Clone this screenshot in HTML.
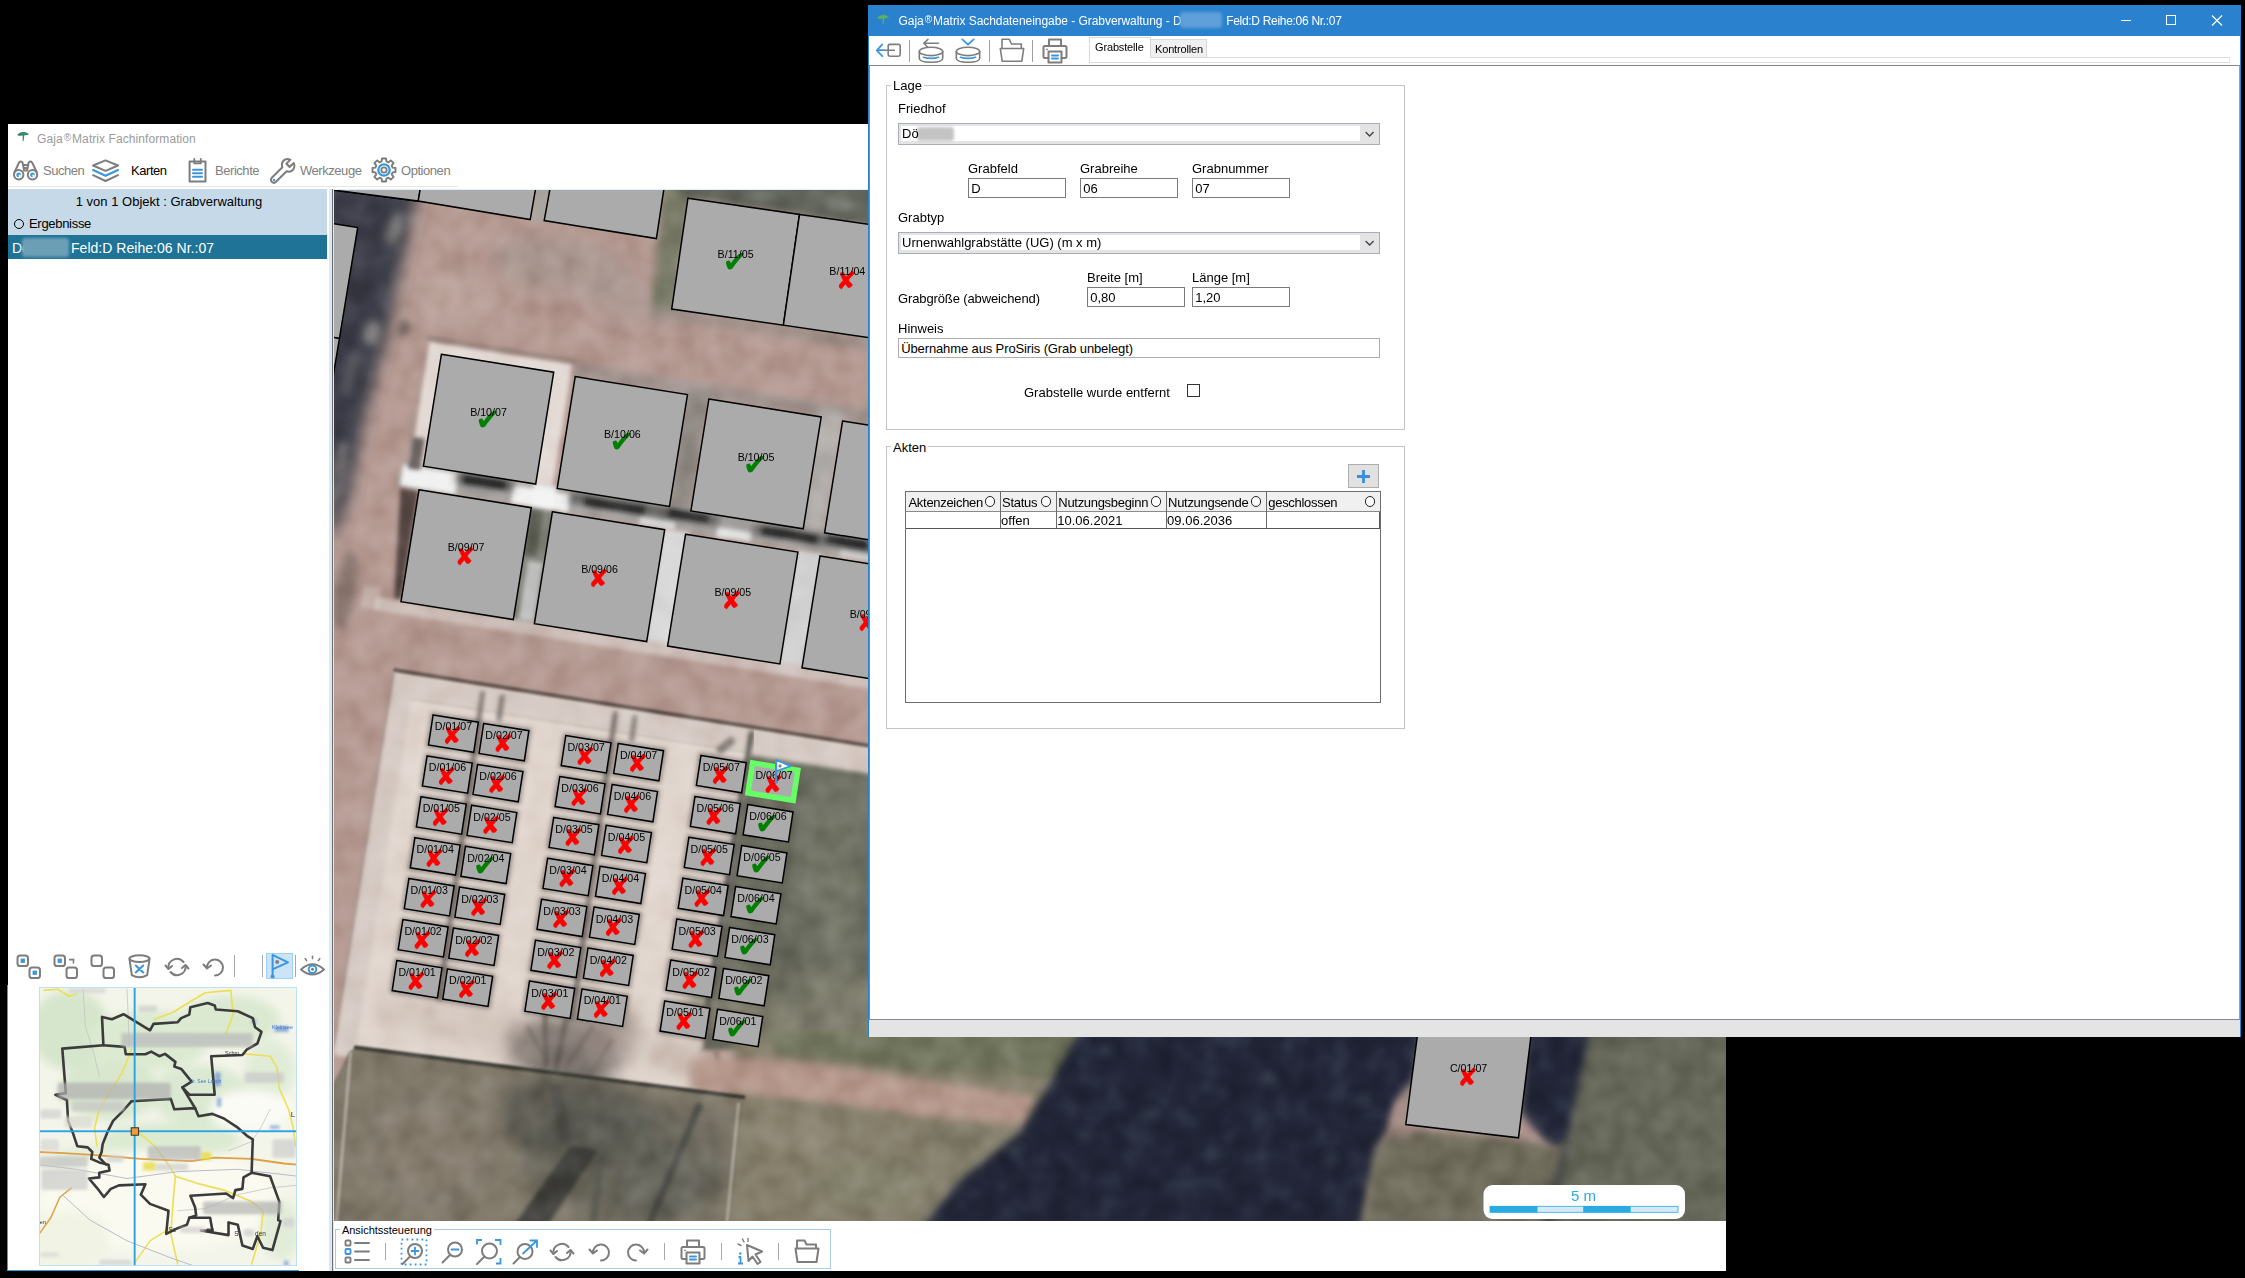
<!DOCTYPE html>
<html lang="de"><head><meta charset="utf-8"><title>Gaja Matrix</title>
<style>
*{box-sizing:border-box;margin:0;padding:0}
html,body{width:2245px;height:1278px;overflow:hidden;background:#000}
body{position:relative;font-family:"Liberation Sans","DejaVu Sans",sans-serif;font-size:13px;color:#000}
.abs{position:absolute}
.t{position:absolute;white-space:nowrap;line-height:16px;height:16px}
#main{position:absolute;left:8px;top:124px;width:1718px;height:1147px;background:#fff}
#dlg{position:absolute;left:868px;top:5px;width:1373px;height:1032px;background:#fff;border:1px solid #2a82cf;border-top:none}
.inp{position:absolute;border:1px solid #7a7a7a;background:#fff;height:20px;line-height:19.5px;padding-left:2.2px;white-space:nowrap}
.cmb{position:absolute;border:1px solid #a9adb6;background:#e4e4e4;height:21.5px;line-height:20.5px;padding-left:3px;white-space:nowrap}
.cmb i{position:absolute;left:2px;top:2px;right:19px;bottom:2.5px;background:#fff;z-index:0}
.cmb b{position:relative;font-weight:normal;z-index:1}
.grp{position:absolute;border:1px solid #c3c3c3}
.grp>span{position:absolute;left:4px;top:-7.5px;background:#fff;padding:0 2px;line-height:16px;white-space:nowrap}
.blur{position:absolute;filter:blur(2.5px)}
</style></head>
<body>
<div id="main"></div>
<svg class="abs" style="left:16px;top:130px" width="14" height="14" viewBox="0 0 14 14"><path d="M1 5 Q4 1.5 7.5 2 Q11 1.5 13 4.5 Q10 5.5 8.3 5.2 L7.6 11 L6.6 11 L6.8 5.4 Q4 6.5 1 5Z" fill="#2e8b57"/><path d="M3 4.2 Q7 2.4 11.5 4" stroke="#3b7fbf" stroke-width="0.8" fill="none"/></svg>
<div class="t" style="left:37px;top:131px;color:#9b9b9b;font-size:12px;letter-spacing:0.08px">Gaja<span style="font-size:10px;position:relative;top:-2px;letter-spacing:0;margin:0 1px">&#174;</span>Matrix Fachinformation</div>
<svg class="abs" style="left:12px;top:157px" width="28" height="28" viewBox="0 0 28 28" fill="none" stroke-linecap="round" stroke-linejoin="round"><g stroke="#7d7d7d" stroke-width="2"><path d="M7 5.6 Q8.8 3.6 10.6 5.6 L11.8 12 M7 5.6 L2.4 15.5 M20.2 5.6 Q18.4 3.6 16.6 5.6 L15.4 12 M20.2 5.6 L24.8 15.5 M11.6 8 H15.6 M11.8 11 H15.4 M11.8 13.6 H15.4"/><circle cx="6.7" cy="17.8" r="4.7"/><circle cx="20.5" cy="17.8" r="4.7"/></g><circle cx="6.7" cy="17.9" r="2.4" fill="#3a96dd"/><circle cx="20.5" cy="17.9" r="2.4" fill="#3a96dd"/><circle cx="7.7" cy="18.8" r="1.2" fill="#fff"/><circle cx="21.5" cy="18.8" r="1.2" fill="#fff"/></svg>
<div class="t" style="left:43px;top:163px;color:#808080;letter-spacing:-0.45px">Suchen</div>
<svg class="abs" style="left:92px;top:157px" width="28" height="28" viewBox="0 0 28 28" fill="none" stroke-linecap="round" stroke-linejoin="round"><path d="M13.5 3.3 L26 8.5 L13.5 13.8 L1.1 8.5Z" stroke="#7d7d7d" stroke-width="2"/><path d="M1.1 13 L13.5 18.8 L26 13" stroke="#3a96dd" stroke-width="2.1"/><path d="M1.1 18.2 L13.5 24 L26 18.2" stroke="#7d7d7d" stroke-width="2"/></svg>
<div class="t" style="left:131px;top:163px;color:#000;letter-spacing:-0.45px">Karten</div>
<svg class="abs" style="left:186px;top:157px" width="24" height="28" viewBox="0 0 24 28" fill="none" stroke-linecap="round" stroke-linejoin="round"><path d="M3.6 4.6 H19.5 V24.6 H3.6Z" stroke="#7d7d7d" stroke-width="2"/><path d="M8.3 2 V6.4 H14.8 V2" stroke="#7d7d7d" stroke-width="1.8"/><path d="M7 12.8 H16 M7 16.2 H16 M7 19.7 H16" stroke="#3a96dd" stroke-width="2"/></svg>
<div class="t" style="left:215px;top:163px;color:#808080;letter-spacing:-0.45px">Berichte</div>
<svg class="abs" style="left:269px;top:156px" width="28" height="28" viewBox="0 0 28 28" fill="none" stroke-linecap="round" stroke-linejoin="round"><path d="M24.8 7 L20.6 11 L17.4 7.8 L21.4 3.6 Q16.8 2 14.2 5 Q12 7.6 13.4 11.2 L2.8 21.8 Q1 24 3 26 Q5 27.8 7 25.8 L17.6 15.2 Q21.2 16.6 23.8 14 Q26.4 11.2 24.8 7Z" stroke="#7d7d7d" stroke-width="2"/><circle cx="5" cy="24" r="1.2" fill="#3a96dd"/></svg>
<div class="t" style="left:300px;top:163px;color:#808080;letter-spacing:-0.45px">Werkzeuge</div>
<svg class="abs" style="left:369.6px;top:156.3px" width="28" height="28" viewBox="0 0 28 28" fill="none" stroke-linecap="round" stroke-linejoin="round"><path d="M12.0 2.5 L16.0 2.5 L16.4 5.4 L18.4 6.3 L20.8 4.4 L23.6 7.2 L21.7 9.6 L22.6 11.6 L25.5 12.0 L25.5 16.0 L22.6 16.4 L21.7 18.4 L23.6 20.8 L20.8 23.6 L18.4 21.7 L16.4 22.6 L16.0 25.5 L12.0 25.5 L11.6 22.6 L9.6 21.7 L7.2 23.6 L4.4 20.8 L6.3 18.4 L5.4 16.4 L2.5 16.0 L2.5 12.0 L5.4 11.6 L6.3 9.6 L4.4 7.2 L7.2 4.4 L9.6 6.3 L11.6 5.4 Z" stroke="#7d7d7d" stroke-width="1.9"/><circle cx="14" cy="14" r="5.7" stroke="#3a96dd" stroke-width="2.3"/><circle cx="14" cy="14" r="2.7" stroke="#7d7d7d" stroke-width="1.8"/></svg>
<div class="t" style="left:401px;top:163px;color:#808080;letter-spacing:-0.45px">Optionen</div>
<div class="abs" style="left:8px;top:186px;width:450px;height:1px;background:#e6e6e6"></div>
<div class="abs" style="left:8px;top:189px;width:319px;height:46px;background:#c5d9e8"></div>
<div class="t" style="left:8px;top:193.5px;width:319px;text-align:center;padding-left:3px">1 von 1 Objekt : Grabverwaltung</div>
<div class="abs" style="left:14px;top:218.5px;width:10px;height:10px;border:1.3px solid #000;border-radius:50%"></div>
<div class="t" style="left:29px;top:215.5px;letter-spacing:-0.3px">Ergebnisse</div>
<div class="abs" style="left:8px;top:235px;width:319px;height:24px;background:#1e7396"></div>
<div class="t" style="left:12px;top:238.5px;color:#fff;font-size:14px;line-height:18px;height:18px">D&#246;</div>
<div class="abs" style="left:22px;top:238px;width:47px;height:19px;background:#6c9fb6;filter:blur(1.6px);border-radius:3px"></div>
<div class="t" style="left:71px;top:238.5px;color:#fff;font-size:14px;line-height:18px;height:18px;letter-spacing:0.03px">Feld:D Reihe:06 Nr.:07</div>
<div class="abs" style="left:329px;top:189px;width:5px;height:1082px;background:#d8eaf8"></div>
<div class="abs" style="left:332px;top:189px;width:1px;height:1082px;background:#6c6c6c"></div>
<div class="abs" style="left:333px;top:189px;width:1393px;height:1px;background:#dfeffc"></div>
<div class="abs" style="left:7px;top:985px;width:1px;height:286px;background:#2e9fe0"></div>
<div class="abs" style="left:7px;top:1270px;width:292px;height:1px;background:#2e9fe0"></div>
<svg class="abs" style="left:16px;top:953.8px" width="26" height="26" viewBox="0 0 26 26" fill="none" stroke-linecap="round" stroke-linejoin="round"><g stroke="#7d7d7d" stroke-width="2"><rect x="1.5" y="1.5" width="10.5" height="10.5" rx="2.6"/><rect x="13.5" y="13.5" width="10.5" height="10.5" rx="2.6"/></g><rect x="4.6" y="4.6" width="4.3" height="4.3" fill="#3a96dd"/><rect x="16.6" y="16.6" width="4.3" height="4.3" fill="#3a96dd"/></svg>
<svg class="abs" style="left:53px;top:953.8px" width="26" height="26" viewBox="0 0 26 26" fill="none" stroke-linecap="round" stroke-linejoin="round"><g stroke="#7d7d7d" stroke-width="2"><rect x="1.5" y="1.5" width="10.5" height="10.5" rx="2.6"/><rect x="13.5" y="13.5" width="10.5" height="10.5" rx="2.6"/></g><rect x="4.6" y="4.6" width="4.3" height="4.3" fill="#3a96dd"/><path d="M16 5.6 H20.5 V9.6" stroke="#7d7d7d" stroke-width="1.6" stroke-linecap="butt" stroke-linejoin="miter"/></svg>
<svg class="abs" style="left:90px;top:953.8px" width="26" height="26" viewBox="0 0 26 26" fill="none" stroke-linecap="round" stroke-linejoin="round"><g stroke="#7d7d7d" stroke-width="2"><rect x="1.5" y="1.5" width="10.5" height="10.5" rx="2.6"/><rect x="13.5" y="13.5" width="10.5" height="10.5" rx="2.6"/></g></svg>
<svg class="abs" style="left:127px;top:953px" width="25" height="27" viewBox="0 0 25 27" fill="none" stroke-linecap="round" stroke-linejoin="round"><ellipse cx="12.5" cy="5.6" rx="10" ry="3.4" stroke="#7d7d7d" stroke-width="2"/><path d="M2.5 6.2 L4.8 22.2 Q12.5 26.4 20.2 22.2 L22.5 6.2" stroke="#7d7d7d" stroke-width="2"/><path d="M8.8 12.5 L16.2 19.5 M16.2 12.5 L8.8 19.5" stroke="#3a96dd" stroke-width="2.1"/></svg>
<svg class="abs" style="left:163.5px;top:953.5px" width="26" height="26" viewBox="0 0 26 26" fill="none" stroke-linecap="round" stroke-linejoin="round"><g stroke="#7d7d7d" stroke-width="2"><path d="M4.5 14.5 A8.5 8.5 0 0 1 19.5 8"/><path d="M21.5 11.5 A8.5 8.5 0 0 1 6.5 18"/><path d="M1.5 11.5 L4.5 15 L8 12"/><path d="M24.5 14.5 L21.5 11 L18 14"/></g></svg>
<svg class="abs" style="left:202px;top:953.5px" width="24" height="26" viewBox="0 0 24 26" fill="none" stroke-linecap="round" stroke-linejoin="round"><g stroke="#7d7d7d" stroke-width="2"><path d="M5 14 A8 8 0 1 1 13 21.5"/><path d="M1.5 10.5 L5 14.5 L9 11.5"/></g></svg>
<div class="abs" style="left:234px;top:955px;width:1px;height:22px;background:#a8a8a8"></div>
<div class="abs" style="left:262px;top:955px;width:1px;height:22px;background:#a8a8a8"></div>
<div class="abs" style="left:266px;top:953px;width:27px;height:26px;background:#cce4f7;border:1px solid #9fd0f5"></div>
<svg class="abs" style="left:266px;top:953px" width="26" height="26" viewBox="0 0 26 26" fill="none" stroke-linecap="round" stroke-linejoin="round"><path d="M6.6 2 V23.5" stroke="#3a96dd" stroke-width="2"/><path d="M7 2.2 L22 9.4 L7 16.2" stroke="#3a96dd" stroke-width="2" fill="none"/><circle cx="11.2" cy="9" r="2" fill="#808080"/><circle cx="6.6" cy="23.6" r="2" fill="#3a96dd"/></svg>
<div class="abs" style="left:295px;top:955px;width:1px;height:22px;background:#a8a8a8"></div>
<svg class="abs" style="left:299px;top:953px" width="27" height="26" viewBox="0 0 27 26" fill="none" stroke-linecap="round" stroke-linejoin="round"><path d="M2 16.5 Q13.5 6 25 16.5 Q13.5 26.5 2 16.5Z" stroke="#7d7d7d" stroke-width="1.9"/><circle cx="13.5" cy="16.3" r="3.8" stroke="#3a96dd" stroke-width="2"/><circle cx="13.5" cy="16.3" r="1.5" fill="#7d7d7d"/><path d="M13.5 3.2 V5.6 M6.2 5.6 L7.6 7.6 M20.8 5.6 L19.4 7.6" stroke="#7d7d7d" stroke-width="1.6"/></svg>
<div class="abs" style="left:335px;top:1229px;width:495.5px;height:40px;border:1px solid #a9cbe5"></div>
<div class="t" style="left:340px;top:1221.7px;background:#fff;padding:0 2px;font-size:11px;letter-spacing:-0.04px">Ansichtssteuerung</div>
<svg class="abs" style="left:344px;top:1238px" width="28" height="28" viewBox="0 0 28 28" fill="none" stroke-linecap="round" stroke-linejoin="round"><g stroke="#7d7d7d" stroke-width="1.9"><rect x="1.5" y="2.5" width="5" height="5" rx="1"/><rect x="1.5" y="19.5" width="5" height="5" rx="1"/><path d="M11 5 H25 M11 13.5 H25 M11 22 H25"/></g><rect x="1.5" y="11" width="5" height="5" rx="1" stroke="#3a96dd" stroke-width="1.9"/></svg>
<div class="abs" style="left:385px;top:1243px;width:1px;height:17px;background:#a8a8a8"></div>
<svg class="abs" style="left:400px;top:1238px" width="29" height="29" viewBox="0 0 29 29" fill="none" stroke-linecap="round" stroke-linejoin="round"><rect x="1.5" y="1.5" width="25" height="25" stroke="#3a96dd" stroke-width="1.8" stroke-dasharray="1.8 3.2" stroke-linecap="butt"/><circle cx="15" cy="13" r="7" stroke="#7d7d7d" stroke-width="2"/><path d="M10 18.5 L2.5 26" stroke="#7d7d7d" stroke-width="2"/><path d="M15 9.5 V16.5 M11.5 13 H18.5" stroke="#3a96dd" stroke-width="1.8"/></svg>
<svg class="abs" style="left:440px;top:1238px" width="26" height="29" viewBox="0 0 26 29" fill="none" stroke-linecap="round" stroke-linejoin="round"><circle cx="15" cy="11.5" r="7" stroke="#7d7d7d" stroke-width="2"/><path d="M10 17 L2.5 24.5" stroke="#7d7d7d" stroke-width="2"/><path d="M11.5 11.5 H18.5" stroke="#3a96dd" stroke-width="1.8"/></svg>
<svg class="abs" style="left:475px;top:1238px" width="28" height="29" viewBox="0 0 28 29" fill="none" stroke-linecap="round" stroke-linejoin="round"><circle cx="14.5" cy="13" r="7.5" stroke="#7d7d7d" stroke-width="2"/><path d="M9 19 L2 26" stroke="#7d7d7d" stroke-width="2"/><path d="M2 6.5 V2 H7 M20 2 H25.5 V7 M25.5 20 V25.5 H21" stroke="#3a96dd" stroke-width="1.8" stroke-linecap="butt" stroke-linejoin="miter"/></svg>
<svg class="abs" style="left:512px;top:1238px" width="28" height="29" viewBox="0 0 28 29" fill="none" stroke-linecap="round" stroke-linejoin="round"><circle cx="13" cy="13.5" r="7.5" stroke="#7d7d7d" stroke-width="2"/><path d="M7.5 19.5 L1.5 25.5" stroke="#7d7d7d" stroke-width="2"/><path d="M11 15.5 L25 2.5 M18.5 2.5 H25 V9" stroke="#3a96dd" stroke-width="1.8"/></svg>
<svg class="abs" style="left:549px;top:1238.5px" width="26" height="26" viewBox="0 0 26 26" fill="none" stroke-linecap="round" stroke-linejoin="round"><g stroke="#7d7d7d" stroke-width="2"><path d="M4.5 14.5 A8.5 8.5 0 0 1 19.5 8"/><path d="M21.5 11.5 A8.5 8.5 0 0 1 6.5 18"/><path d="M1.5 11.5 L4.5 15 L8 12"/><path d="M24.5 14.5 L21.5 11 L18 14"/></g></svg>
<svg class="abs" style="left:588px;top:1238.5px" width="24" height="26" viewBox="0 0 24 26" fill="none" stroke-linecap="round" stroke-linejoin="round"><g stroke="#7d7d7d" stroke-width="2"><path d="M5 14 A8 8 0 1 1 13 21.5"/><path d="M1.5 10.5 L5 14.5 L9 11.5"/></g></svg>
<svg class="abs" style="left:625px;top:1238.5px" width="24" height="26" viewBox="0 0 24 26" fill="none" stroke-linecap="round" stroke-linejoin="round"><g stroke="#7d7d7d" stroke-width="2" transform="translate(24 0) scale(-1 1)"><path d="M5 14 A8 8 0 1 1 13 21.5"/><path d="M1.5 10.5 L5 14.5 L9 11.5"/></g></svg>
<div class="abs" style="left:664px;top:1243px;width:1px;height:17px;background:#a8a8a8"></div>
<svg class="abs" style="left:680px;top:1238px" width="27" height="28" viewBox="0 0 27 28" fill="none" stroke-linecap="round" stroke-linejoin="round"><g stroke="#7d7d7d" stroke-width="2"><path d="M7 9 V2.5 H19 V9"/><path d="M6.5 21 H3 Q1.5 21 1.5 19.5 V10.5 Q1.5 9 3 9 H23 Q24.5 9 24.5 10.5 V19.5 Q24.5 21 23 21 H19.5"/><path d="M6.5 14.5 H19.5 V25.5 H6.5Z"/></g><path d="M10 18.5 H16 M10 21.5 H16" stroke="#3a96dd" stroke-width="2"/><circle cx="5" cy="12.3" r="0.9" fill="#7d7d7d"/></svg>
<div class="abs" style="left:721px;top:1243px;width:1px;height:17px;background:#a8a8a8"></div>
<svg class="abs" style="left:736px;top:1237px" width="29" height="30" viewBox="0 0 29 30" fill="none" stroke-linecap="round" stroke-linejoin="round"><path d="M11 8 L26 14.5 L19.5 17.5 L24.5 25 L21.5 27 L16.5 19.5 L12.5 24Z" stroke="#7d7d7d" stroke-width="2"/><path d="M6.5 2 L8 5 M2 7 L5 8.5 M12 1.5 V4.5" stroke="#7d7d7d" stroke-width="1.4"/><path d="M2.5 20 H4.5 V26.5 M2 26.5 H7" stroke="#3a96dd" stroke-width="1.8" stroke-linecap="butt"/><circle cx="4.3" cy="16.5" r="1.2" fill="#3a96dd"/></svg>
<div class="abs" style="left:778px;top:1243px;width:1px;height:17px;background:#a8a8a8"></div>
<svg class="abs" style="left:794px;top:1238px" width="27" height="27" viewBox="0 0 27 27" fill="none" stroke-linecap="round" stroke-linejoin="round"><path d="M3.5 24 L1.5 10.5 H24.5 L22.5 24Z" stroke="#7d7d7d" stroke-width="2"/><path d="M3 10 V2.5 H10.5 L12.5 6.5 H22 V10" stroke="#7d7d7d" stroke-width="2"/></svg>
<svg class="abs" style="left:39px;top:987px" width="258" height="279" viewBox="39 987 258 279">
<defs><filter id="mb"><feGaussianBlur stdDeviation="1.6"/></filter><filter id="mb3"><feGaussianBlur stdDeviation="5"/></filter><clipPath id="mc"><rect x="39" y="987" width="258" height="279"/></clipPath></defs>
<g clip-path="url(#mc)">
<rect x="39" y="987" width="258" height="279" fill="#f4f5ea"/>
<g filter="url(#mb3)">
<ellipse cx="70" cy="1030" rx="40" ry="40" fill="#d6e6cc"/>
<ellipse cx="150" cy="1040" rx="60" ry="30" fill="#dcead2"/>
<ellipse cx="230" cy="1020" rx="50" ry="25" fill="#dbe9d1"/>
<ellipse cx="110" cy="1090" rx="50" ry="30" fill="#d8e7ce"/>
<ellipse cx="200" cy="1095" rx="50" ry="30" fill="#dbe9d2"/>
<ellipse cx="170" cy="1140" rx="70" ry="18" fill="#dcead2"/>
<ellipse cx="270" cy="1070" rx="25" ry="30" fill="#e0ecd8"/>
<ellipse cx="250" cy="1110" rx="40" ry="20" fill="#fbfbf6"/>
<ellipse cx="90" cy="1160" rx="40" ry="15" fill="#e4edd9"/>
<ellipse cx="160" cy="1200" rx="120" ry="50" fill="#fafaf0"/>
<ellipse cx="70" cy="1240" rx="40" ry="30" fill="#f1f4e4"/>
<ellipse cx="280" cy="1230" rx="20" ry="30" fill="#e2ecd8"/>
</g>
<g fill="none" stroke-linecap="round" stroke-linejoin="round">
<polyline points="43.9,990.4 57.7,989.2 69.2,996.2 76.2,993.9" stroke="#ecdf55" stroke-width="1.6"/>
<polyline points="154.7,1019.2 173.1,1012.3 191.6,1000.8 205.4,992.7 230.8,990.4 233.1,1014.6 226.2,1033.1" stroke="#ecdf55" stroke-width="1.6"/>
<polyline points="244.7,1053.9 270.1,1056.2 277,1067.7 279.3,1088.5 288.5,1109.3 293.2,1127.7 295.5,1146.2" stroke="#ecdf55" stroke-width="1.6"/>
<polyline points="131.6,1049.3 122.3,1072.3 110.8,1090.8 99.3,1109.3 94.6,1127.7 96.9,1146.2" stroke="#ecdf55" stroke-width="1.6"/>
<polyline points="138.5,1132.4 154.7,1146.2 168.5,1164.7 175.4,1176.2 173.1,1201.6 170.8,1233.9 177.7,1263.9" stroke="#ecdf55" stroke-width="1.6"/>
<polyline points="175.4,1176.2 196.2,1183.1 223.9,1190.1 251.6,1201.6 263.1,1210.8 260.8,1233.9 251.6,1263.9" stroke="#ecdf55" stroke-width="1.6"/>
<polyline points="133.9,1263.9 150,1240.8 168.5,1229.3" stroke="#ecdf55" stroke-width="1.4"/>
<polyline points="39.2,1152 64.6,1153.1 99.3,1155.4 140.8,1158.9 191.6,1161.2 214.7,1157.7 251.6,1158.9 283.9,1163.5 297.8,1164.7" stroke="#e0a040" stroke-width="1.8"/>
<polyline points="39.2,1233.9 50.8,1217.8 60,1197 71.6,1187.8" stroke="#e0a040" stroke-width="1.5"/>
<polyline points="39.2,1164.7 76.2,1169.3 127,1178.5 177.7,1171.6 237.8,1169.3 297.8,1176.2" stroke="#b9bcc8" stroke-width="1"/>
<polyline points="62.3,1194.7 90,1220.1 127,1240.8 168.5,1257 191.6,1265.1" stroke="#b9bcc8" stroke-width="1"/>
<polyline points="83.1,989.2 85.4,1026.2 94.6,1056.2 99.3,1077" stroke="#c4c4c4" stroke-width="0.8"/>
<polyline points="127,989.2 128.1,1014.6 129.3,1046.9" stroke="#c4c4c4" stroke-width="0.8"/>
<polyline points="177.7,1210.8 205.4,1208.5 237.8,1194.7 270.1,1187.8 295.5,1185.4" stroke="#c4c4c4" stroke-width="0.8"/>
<polyline points="270.1,1109.3 260.8,1127.7 251.6,1141.6 228.5,1150.8" stroke="#c4c4c4" stroke-width="0.8"/>
</g>
<g filter="url(#mb)">
<rect x="214.7" y="1072.3" width="5.8" height="13.9" fill="#7d9fd8" opacity="0.85"/>
<rect x="217" y="1097.7" width="4.2" height="9.2" fill="#8aa8dc" opacity="0.85"/>
<rect x="274.7" y="1026.2" width="13.9" height="5.8" fill="#7d9fd8" opacity="0.85"/>
<rect x="270.1" y="1125.4" width="9.2" height="3.5" fill="#8aa8dc" opacity="0.85"/>
<rect x="251.6" y="1019.2" width="4.6" height="4.6" fill="#8aa8dc" opacity="0.85"/>
<rect x="283.9" y="1260.5" width="4.6" height="6.9" fill="#8aa8dc" opacity="0.85"/>
<rect x="143.1" y="1162.4" width="12.7" height="8.1" fill="#e6dc4a" opacity="0.85"/>
<rect x="200.8" y="1152" width="10.4" height="8.1" fill="#e6dc4a" opacity="0.85"/>
</g>
<polyline points="103.4,1045.3 102,1016.9 111.9,1019.2 123.5,1014.2 150,1030.3 153.5,1023.9 177.7,1022.2 181.2,1018.1 189.3,1014.6 190.4,1007.2 207.7,1003.1 214.7,1005.4 215.8,1009.5 237.8,1011.2 252.8,1018.1 255.1,1027.3 261.5,1031.9 257.4,1043.5 247,1049.3 242.4,1055 211.2,1056.2 214.7,1094.7 189.3,1094.7 182.4,1087.3 191.6,1081.6 181.2,1068.9 174.3,1066.6 175.4,1061.9 165,1053.9 159.3,1056.2 151.2,1051.6 145.4,1054.3 125.8,1054.3 124.6,1046.9 103.4,1045.3" stroke="#3b3b3b" stroke-width="2.6" fill="none" stroke-linejoin="round" stroke-linecap="round"/>
<polyline points="103.4,1045.3 62.3,1048.6 65.8,1093.1 55.4,1094.7 66.9,1100 68.1,1120.8 72.7,1132.4 77.3,1146.2 87.7,1147.4 92.3,1152 91.2,1158.9 99.3,1162.4 108.5,1164.7 109.6,1170.4 99.3,1172.8 99.3,1177.4 88.9,1178.5 96.9,1187.8 103.9,1197 110.8,1188.9 118.9,1185.4 145.4,1184.3 140.8,1194.7 150,1203.9 168.5,1210.8 166.2,1233.9 177.7,1228.2 187,1224.7 189.3,1217.8 210.1,1217.8 212.4,1230.5 200.8,1230.5 228.5,1235.1 228.5,1222.4 237.8,1224.7 242.4,1245.5 252.8,1248.9 257.4,1236.2 263.1,1247.8 272.4,1250.1 280.5,1221.2 278.2,1220.1 279.3,1201.6 270.1,1176.2 251.6,1172.8 252.8,1139.3 247,1135.8 237.8,1127.7 223.9,1118.5 212.4,1113.9 198.5,1116.2 195.1,1108.1 174.3,1109.3 170.8,1098.9 131.6,1101.2" stroke="#3b3b3b" stroke-width="2.6" fill="none" stroke-linejoin="round" stroke-linecap="round"/>
<polyline points="131.6,1101.2 122.3,1111.6 113.1,1120.8 107.3,1132.4 102.7,1143.9 101.6,1152 99.3,1157.7 106.2,1164.7" stroke="#3b3b3b" stroke-width="2.6" fill="none" stroke-linejoin="round" stroke-linecap="round"/>
<polyline points="251.6,1172.8 243.5,1177.4 242.4,1188.9 235.4,1190.1 233.1,1198.1 226.2,1193.5 190.4,1195.8 195.1,1207.4 196.2,1215.5 189.3,1217.8" stroke="#3b3b3b" stroke-width="2.6" fill="none" stroke-linejoin="round" stroke-linecap="round"/>
<polyline points="182.4,1087.3 195.1,1108.1" stroke="#3b3b3b" stroke-width="2.6" fill="none" stroke-linejoin="round" stroke-linecap="round"/>
<g filter="url(#mb)">
<rect x="121.2" y="1033.1" width="131.6" height="13.9" rx="2" fill="#b8b8b8" opacity="0.72"/>
<rect x="57.7" y="1082.7" width="113.1" height="16.2" rx="2" fill="#b0b0b0" opacity="0.72"/>
<rect x="71.6" y="1101.2" width="53.1" height="10.4" rx="2" fill="#c6c6c6" opacity="0.72"/>
<rect x="147.7" y="1146.2" width="53.1" height="13.9" rx="2" fill="#b5b5b5" opacity="0.72"/>
<rect x="203.1" y="1201.6" width="78.5" height="12.7" rx="2" fill="#b3b3b3" opacity="0.72"/>
<rect x="39.2" y="1156.6" width="48.5" height="10.4" rx="2" fill="#c2c2c2" opacity="0.72"/>
<rect x="41.5" y="1169.3" width="46.2" height="20.8" rx="2" fill="#cbcbcb" opacity="0.72"/>
<rect x="244.7" y="1072.3" width="39.2" height="10.4" rx="2" fill="#c9c9c9" opacity="0.72"/>
<rect x="272.4" y="1139.3" width="23.1" height="18.5" rx="2" fill="#cdcdcd" opacity="0.72"/>
<rect x="40.4" y="1109.3" width="20.8" height="9.2" rx="2" fill="#d0d0d0" opacity="0.72"/>
<rect x="69.2" y="988.1" width="36.9" height="5.1" rx="2" fill="#d2d2d2" opacity="0.72"/>
<rect x="138.5" y="1005.4" width="18.5" height="6.5" rx="2" fill="#cfcfcf" opacity="0.72"/>
<rect x="155.8" y="1163.5" width="32.3" height="6.9" rx="2" fill="#cccccc" opacity="0.72"/>
<rect x="106.2" y="1155.4" width="17.3" height="6.9" rx="2" fill="#cfcfcf" opacity="0.72"/>
<rect x="40.4" y="1139.3" width="18.5" height="11.5" rx="2" fill="#d5d5d5" opacity="0.72"/>
<rect x="180" y="1227" width="25.4" height="5.8" rx="2" fill="#d2cccc" opacity="0.72"/>
<rect x="243.5" y="1229.3" width="10.4" height="6.9" rx="2" fill="#cccccc" opacity="0.72"/>
<rect x="282.8" y="1217.8" width="11.5" height="9.2" rx="2" fill="#d0d0d0" opacity="0.72"/>
<rect x="99.3" y="1259.8" width="32.3" height="5.1" rx="2" fill="#cfcfcf" opacity="0.72"/>
<rect x="40.4" y="1252.4" width="18.5" height="4.6" rx="2" fill="#d5d5d5" opacity="0.72"/>
<rect x="64.6" y="1116.2" width="27.7" height="11.5" rx="2" fill="#d8d8d0" opacity="0.72"/>
</g>
<g font-family="Liberation Sans, Arial, sans-serif" fill="#333">
<text x="168.5" y="1232.1" font-size="6.5">Sc</text>
<text x="206.6" y="1232.1" font-size="6.5">en</text>
<text x="234.3" y="1235.8" font-size="6.5">S</text>
<text x="255.1" y="1235.8" font-size="6.5">den</text>
<text x="290.8" y="1116.7" font-size="8">L</text>
<text x="271.9" y="1028.9" font-size="5.5" fill="#3a78c8">Kleinsee</text>
<text x="189.3" y="1083.2" font-size="5" fill="#3a78c8">Gr. See Lauch</text>
<text x="39.7" y="1224.2" font-size="5.5">en</text>
<text x="225.1" y="1055.3" font-size="5.5">Schm</text>
</g>
<rect x="133.7" y="987" width="1.9" height="279" fill="#29a3e3"/><rect x="39" y="1130.3" width="258" height="1.9" fill="#29a3e3"/>
<rect x="131.2" y="1127.8" width="7.4" height="7.4" fill="#f39a3a" stroke="#222" stroke-width="0.9"/>
</g>
<rect x="39.5" y="987.5" width="257" height="278" fill="none" stroke="#bfdff5" stroke-width="1"/>
</svg>
<svg class="abs" style="left:334px;top:190px" width="1392" height="1031" viewBox="334 190 1392 1031">
<defs><filter id="b2" x="-5%" y="-5%" width="110%" height="110%"><feGaussianBlur stdDeviation="2"/></filter><filter id="b4" x="-10%" y="-10%" width="120%" height="120%"><feGaussianBlur stdDeviation="4"/></filter><filter id="b8" x="-20%" y="-20%" width="140%" height="140%"><feGaussianBlur stdDeviation="8"/></filter><filter id="noise" x="0" y="0" width="100%" height="100%" color-interpolation-filters="sRGB"><feTurbulence type="fractalNoise" baseFrequency="0.04" numOctaves="2" seed="7"/><feColorMatrix type="matrix" values="0 0 0 1 0  0 0 0 1 0  0 0 0 1 0  0 0 0 0 1"/><feGaussianBlur stdDeviation="1.6"/></filter><filter id="b1"><feGaussianBlur stdDeviation="1.1"/></filter></defs>
<rect x="334" y="190" width="1392" height="1031" fill="#b59a92"/>
<g filter="url(#b8)" ><ellipse cx="560" cy="265" rx="70" ry="28" fill="#a3958f" opacity="0.6" transform="rotate(9 560 265)"/><ellipse cx="640" cy="300" rx="60" ry="22" fill="#a89a94" opacity="0.5" transform="rotate(9 640 300)"/><ellipse cx="450" cy="300" rx="40" ry="30" fill="#bca59d" opacity="0.7" transform="rotate(0 450 300)"/><ellipse cx="560" cy="640" rx="120" ry="18" fill="#b9a29a" opacity="0.6" transform="rotate(9 560 640)"/></g>
<g filter="url(#b8)" ><polygon points="330,186 418,186 404,255 388,330 364,420 348,500 330,545" fill="#41424d"/></g>
<g filter="url(#b4)" ><polygon points="330,186 396,186 384,255 368,330 348,420 336,480 330,500" fill="#3a3b47"/></g>
<g filter="url(#b4)" ><ellipse cx="394" cy="230" rx="8" ry="16" fill="#8d8c8a" opacity="0.8" transform="rotate(20 394 230)"/><ellipse cx="372" cy="332" rx="9" ry="12" fill="#8d8c8a" opacity="0.8" transform="rotate(20 372 332)"/><ellipse cx="352" cy="372" rx="6" ry="22" fill="#777" opacity="0.5" transform="rotate(12 352 372)"/><ellipse cx="404" cy="328" rx="6" ry="8" fill="#5c524f" opacity="0.8" transform="rotate(20 404 328)"/><ellipse cx="345" cy="590" rx="10" ry="40" fill="#6a5a56" opacity="0.6" transform="rotate(8 345 590)"/><ellipse cx="340" cy="470" rx="8" ry="30" fill="#8a8683" opacity="0.6" transform="rotate(8 340 470)"/></g>
<g filter="url(#b4)" ><polygon points="662,186 692,190 674,314 652,306" fill="#797c67"/><polygon points="652,306 900,343 898,354 650,316" fill="#9a8e86"/><polygon points="664,180 900,180 900,232 800,216 688,199" fill="#5f6259"/><polygon points="536,186 551,186 545,222 531,219" fill="#a6a6a2"/></g>
<g filter="url(#b4)" ><ellipse cx="840" cy="205" rx="18" ry="7" fill="#8e918a" opacity="0.7" transform="rotate(8 840 205)"/><ellipse cx="760" cy="196" rx="14" ry="5" fill="#777a72" opacity="0.7" transform="rotate(8 760 196)"/></g>
<g filter="url(#b2)" ><polygon points="429.3,341.2 572.5,364.1 552.1,491.4 408.9,468.6" fill="#e3d9d4" opacity="1"/></g>
<g filter="url(#b2)" ><path d="M427.8 338 L575 361.4" stroke="#85766f" stroke-width="3.5" stroke-linecap="round" opacity="0.8"/><path d="M426.8 337.8 L408.8 450.4" stroke="#a3958f" stroke-width="3" stroke-linecap="round" opacity="0.6"/></g>
<g filter="url(#b4)" ><polygon points="574.6,363.4 917.3,418.1 915.1,431.9 572.4,377.2" fill="#9b928e" opacity="0.85"/><polygon points="685.1,388.1 710.8,392.2 691.6,511.7 665.9,507.6" fill="#8f8a86" opacity="0.95"/><polygon points="818.4,409.4 844.1,413.5 824.9,532.9 799.3,528.8" fill="#b2b0ae" opacity="0.95"/></g>
<g filter="url(#b2)" ><polygon points="401.8,462.4 897.5,541.5 893.8,564.2 398.1,485.1" fill="#a9a7a5" opacity="1"/></g>
<g filter="url(#b2)" ><polygon points="403.4,464.7 458.7,473.5 455.4,494.3 400.1,485.4" fill="#f4f4f4" opacity="0.95"/><polygon points="513.5,485.3 570.8,494.4 568,512.2 510.7,503.1" fill="#f4f4f4" opacity="0.95"/><polygon points="640.3,515.7 675.9,521.3 674.5,530.2 638.9,524.5" fill="#f4f4f4" opacity="0.7"/><polygon points="717.5,526.9 752.1,532.5 750.5,542.3 715.9,536.8" fill="#f4f4f4" opacity="0.8"/><polygon points="840.8,547.6 895.1,556.3 893.7,565.2 839.4,556.5" fill="#f4f4f4" opacity="0.6"/><polygon points="534.2,482.5 557,486.2 552.5,513.8 529.8,510.2" fill="#f4f4f4" opacity="0.9"/></g>
<g filter="url(#b4)" ><polygon points="456.9,472.2 514.2,481.4 512.6,491.2 455.3,482.1" fill="#3a3a3a" opacity="0.8"/><polygon points="571.1,492.5 719.3,516.1 717.7,526 569.6,502.3" fill="#3a3a3a" opacity="0.8"/><polygon points="753.5,523.6 886.8,544.8 885.2,554.7 751.9,533.4" fill="#3a3a3a" opacity="0.8"/></g>
<g filter="url(#b2)" ><polygon points="464.5,475.5 506,482.1 504.9,489 463.4,482.4" fill="#171717" opacity="0.8"/><polygon points="585.5,497.8 644.7,507.2 643.6,514.1 584.4,504.7" fill="#171717" opacity="0.8"/><polygon points="669.7,509.2 709.2,515.5 708.1,522.4 668.6,516.1" fill="#171717" opacity="0.8"/><polygon points="763.1,527.1 817.4,535.8 816.3,542.7 762,534" fill="#171717" opacity="0.8"/><polygon points="827.6,535.4 867.1,541.7 866,548.6 826.5,542.3" fill="#171717" opacity="0.8"/></g>
<g filter="url(#b2)" ><polygon points="530.3,507.2 556,511.3 537.7,624.9 512.1,620.8" fill="#7d7f74" opacity="1"/><polygon points="663.6,528.5 689.3,532.6 669.5,656 643.8,651.9" fill="#d9d9d9" opacity="1"/><polygon points="796.9,549.7 822.6,553.8 802.8,677.3 777.1,673.2" fill="#d2d2d2" opacity="1"/><polygon points="376.1,597.1 875.8,676.8 873.7,689.6 374,609.9" fill="#cfc1bb" opacity="0.9"/></g>
<g filter="url(#b2)" ><polygon points="527.8,560.5 543.6,563 534.1,622.3 518.3,619.7" fill="#c9c9c9" opacity="0.9"/><polygon points="530.8,510.3 543.6,512.4 536.5,556.8 523.7,554.8" fill="#55574c" opacity="0.9"/></g>
<g filter="url(#b2)" ><polygon points="400.6,488.6 418.4,491.4 401.1,599 394.2,597.9" fill="#4a3f3b" opacity="0.9"/><polygon points="413,436.9 424.8,438.7 419.7,470.3 407.9,468.5" fill="#4d4542" opacity="0.85"/><polygon points="363.9,585 381.6,587.8 378.1,609.5 360.4,606.7" fill="#dcd4d0" opacity="0.35"/></g>
<g filter="url(#b2)" ><polygon points="395,670 908.5,751.9 902.2,791.4 752.1,767.5 696.6,1113 333.2,1055.1" fill="#d6cbc4"/></g>
<g filter="url(#b2)" ><polygon points="411.6,699 747.4,752.5 689.7,1111.9 353.9,1058.4" fill="#e0d5cd"/></g>
<g filter="url(#b8)" ><ellipse cx="470" cy="800" rx="60" ry="90" fill="#e6dcd5" opacity="0.6" transform="rotate(9 470 800)"/><ellipse cx="640" cy="880" rx="30" ry="80" fill="#e5dbd4" opacity="0.5" transform="rotate(9 640 880)"/><ellipse cx="470" cy="1022" rx="100" ry="22" fill="#cfc2b9" opacity="0.8" transform="rotate(8 470 1022)"/><ellipse cx="690" cy="1060" rx="45" ry="16" fill="#c3b2a8" opacity="0.8" transform="rotate(8 690 1060)"/></g>
<g filter="url(#b1)" ><path d="M395 670 L908.5 751.9" stroke="#5e4f4a" stroke-width="4" stroke-linecap="round" opacity="0.9"/><path d="M392.7 671.7 L332.8 1044.9" stroke="#a59790" stroke-width="3" stroke-linecap="round" opacity="0.7"/><path d="M411.6 699 L747.4 752.5" stroke="#b8aca4" stroke-width="2" stroke-linecap="round" opacity="0.4"/></g>
<g filter="url(#b2)" ><polygon points="750,755 904.1,779.5 900,1050 700,1050 702.1,1053.2" fill="#6e6f63"/></g>
<g filter="url(#b8)" ><ellipse cx="800" cy="1010" rx="110" ry="40" fill="#85826f" opacity="0.8" transform="rotate(5 800 1010)"/><ellipse cx="830" cy="880" rx="40" ry="90" fill="#747668" opacity="0.7" transform="rotate(0 830 880)"/><ellipse cx="790" cy="960" rx="30" ry="50" fill="#5f6258" opacity="0.5" transform="rotate(0 790 960)"/></g>
<g filter="url(#b2)" ><path d="M751.5 732.9 L704.9 1023.2" stroke="#474843" stroke-width="5" stroke-linecap="round" opacity="0.85"/></g>
<g filter="url(#b2)" ><path d="M482.6 692.9 L439.3 998.5" stroke="#5e5652" stroke-width="4.5" stroke-linecap="round" opacity="0.8"/><path d="M502.1 696.9 L499.1 718.9" stroke="#6a625e" stroke-width="5" stroke-linecap="round" opacity="0.8"/><path d="M615.3 713.5 L572 1019.1" stroke="#5e5652" stroke-width="4.5" stroke-linecap="round" opacity="0.8"/><path d="M634.8 717.5 L631.8 739.5" stroke="#6a625e" stroke-width="5" stroke-linecap="round" opacity="0.8"/><path d="M731 741.4 L721 749.4" stroke="#6a625e" stroke-width="8" stroke-linecap="round" opacity="0.7"/></g>
<g filter="url(#b2)" ><polygon points="396.8,960.5 442,967.8 437.4,997.9 392.2,990.6" fill="none" stroke="#4b4541" stroke-width="4.5" opacity="0.55"/><polygon points="402.9,919.6 448.1,926.9 443.5,957 398.2,949.7" fill="none" stroke="#4b4541" stroke-width="4.5" opacity="0.55"/><polygon points="408.9,878.6 454.1,885.9 449.5,916 404.3,908.7" fill="none" stroke="#4b4541" stroke-width="4.5" opacity="0.55"/><polygon points="414.9,837.7 460.1,845 455.6,875.1 410.3,867.8" fill="none" stroke="#4b4541" stroke-width="4.5" opacity="0.55"/><polygon points="421,796.8 466.2,804.1 461.6,834.2 416.4,826.9" fill="none" stroke="#4b4541" stroke-width="4.5" opacity="0.55"/><polygon points="427.1,755.9 472.2,763.1 467.7,793.2 422.4,786" fill="none" stroke="#4b4541" stroke-width="4.5" opacity="0.55"/><polygon points="433.1,714.9 478.3,722.2 473.7,752.3 428.5,745" fill="none" stroke="#4b4541" stroke-width="4.5" opacity="0.55"/><polygon points="447.4,969 492.6,976.3 488,1006.4 442.8,999.1" fill="none" stroke="#4b4541" stroke-width="4.5" opacity="0.55"/><polygon points="453.4,928.1 498.6,935.4 494.1,965.5 448.8,958.2" fill="none" stroke="#4b4541" stroke-width="4.5" opacity="0.55"/><polygon points="459.5,887.1 504.7,894.4 500.1,924.5 454.9,917.2" fill="none" stroke="#4b4541" stroke-width="4.5" opacity="0.55"/><polygon points="465.5,846.2 510.7,853.5 506.1,883.6 460.9,876.3" fill="none" stroke="#4b4541" stroke-width="4.5" opacity="0.55"/><polygon points="471.6,805.3 516.8,812.6 512.2,842.7 467,835.4" fill="none" stroke="#4b4541" stroke-width="4.5" opacity="0.55"/><polygon points="477.6,764.4 522.9,771.6 518.2,801.8 473,794.5" fill="none" stroke="#4b4541" stroke-width="4.5" opacity="0.55"/><polygon points="483.7,723.4 528.9,730.7 524.3,760.8 479.1,753.5" fill="none" stroke="#4b4541" stroke-width="4.5" opacity="0.55"/><polygon points="529.5,981.1 574.7,988.4 570.1,1018.5 524.9,1011.2" fill="none" stroke="#4b4541" stroke-width="4.5" opacity="0.55"/><polygon points="535.5,940.2 580.8,947.5 576.1,977.6 530.9,970.3" fill="none" stroke="#4b4541" stroke-width="4.5" opacity="0.55"/><polygon points="541.6,899.2 586.8,906.5 582.2,936.6 537,929.3" fill="none" stroke="#4b4541" stroke-width="4.5" opacity="0.55"/><polygon points="547.6,858.3 592.9,865.6 588.2,895.7 543,888.4" fill="none" stroke="#4b4541" stroke-width="4.5" opacity="0.55"/><polygon points="553.7,817.4 598.9,824.7 594.3,854.8 549.1,847.5" fill="none" stroke="#4b4541" stroke-width="4.5" opacity="0.55"/><polygon points="559.8,776.5 605,783.8 600.4,813.9 555.1,806.6" fill="none" stroke="#4b4541" stroke-width="4.5" opacity="0.55"/><polygon points="565.8,735.5 611,742.8 606.4,772.9 561.2,765.6" fill="none" stroke="#4b4541" stroke-width="4.5" opacity="0.55"/><polygon points="582,989 627.2,996.3 622.6,1026.4 577.4,1019.1" fill="none" stroke="#4b4541" stroke-width="4.5" opacity="0.55"/><polygon points="588,948.1 633.2,955.4 628.6,985.5 583.4,978.2" fill="none" stroke="#4b4541" stroke-width="4.5" opacity="0.55"/><polygon points="594.1,907.1 639.3,914.4 634.7,944.5 589.5,937.2" fill="none" stroke="#4b4541" stroke-width="4.5" opacity="0.55"/><polygon points="600.1,866.2 645.4,873.5 640.8,903.6 595.5,896.3" fill="none" stroke="#4b4541" stroke-width="4.5" opacity="0.55"/><polygon points="606.2,825.3 651.4,832.6 646.8,862.7 601.6,855.4" fill="none" stroke="#4b4541" stroke-width="4.5" opacity="0.55"/><polygon points="612.2,784.4 657.5,791.6 652.9,821.8 607.6,814.5" fill="none" stroke="#4b4541" stroke-width="4.5" opacity="0.55"/><polygon points="618.3,743.4 663.5,750.7 658.9,780.8 613.7,773.5" fill="none" stroke="#4b4541" stroke-width="4.5" opacity="0.55"/><polygon points="664.7,1001 709.9,1008.3 705.3,1038.4 660.1,1031.1" fill="none" stroke="#4b4541" stroke-width="4.5" opacity="0.55"/><polygon points="670.8,960.1 716,967.4 711.4,997.5 666.1,990.2" fill="none" stroke="#4b4541" stroke-width="4.5" opacity="0.55"/><polygon points="676.8,919.1 722,926.4 717.4,956.5 672.2,949.2" fill="none" stroke="#4b4541" stroke-width="4.5" opacity="0.55"/><polygon points="682.9,878.2 728.1,885.5 723.5,915.6 678.2,908.3" fill="none" stroke="#4b4541" stroke-width="4.5" opacity="0.55"/><polygon points="688.9,837.3 734.1,844.6 729.5,874.7 684.3,867.4" fill="none" stroke="#4b4541" stroke-width="4.5" opacity="0.55"/><polygon points="695,796.4 740.2,803.6 735.6,833.8 690.4,826.5" fill="none" stroke="#4b4541" stroke-width="4.5" opacity="0.55"/><polygon points="701,755.4 746.2,762.7 741.6,792.8 696.4,785.5" fill="none" stroke="#4b4541" stroke-width="4.5" opacity="0.55"/><polygon points="718,1009.3 763.2,1016.6 758.6,1046.7 713.4,1039.4" fill="none" stroke="#4b4541" stroke-width="4.5" opacity="0.25"/><polygon points="724,968.4 769.2,975.7 764.6,1005.8 719.4,998.5" fill="none" stroke="#4b4541" stroke-width="4.5" opacity="0.25"/><polygon points="730.1,927.4 775.3,934.7 770.7,964.8 725.5,957.5" fill="none" stroke="#4b4541" stroke-width="4.5" opacity="0.25"/><polygon points="736.1,886.5 781.4,893.8 776.8,923.9 731.5,916.6" fill="none" stroke="#4b4541" stroke-width="4.5" opacity="0.25"/><polygon points="742.2,845.6 787.4,852.9 782.8,883 737.6,875.7" fill="none" stroke="#4b4541" stroke-width="4.5" opacity="0.25"/><polygon points="748.2,804.6 793.5,811.9 788.9,842 743.6,834.8" fill="none" stroke="#4b4541" stroke-width="4.5" opacity="0.25"/><polygon points="754.3,763.7 799.5,771 794.9,801.1 749.7,793.8" fill="none" stroke="#4b4541" stroke-width="4.5" opacity="0.25"/></g>
<g filter="url(#b8)" ><ellipse cx="565" cy="1052" rx="56" ry="32" fill="#6f6660" opacity="0.85" transform="rotate(8 565 1052)"/><ellipse cx="600" cy="1030" rx="30" ry="26" fill="#8a7f78" opacity="0.6" transform="rotate(0 600 1030)"/><ellipse cx="615" cy="1035" rx="26" ry="30" fill="#a1958d" opacity="0.6" transform="rotate(0 615 1035)"/><ellipse cx="520" cy="1045" rx="20" ry="18" fill="#a89c94" opacity="0.5" transform="rotate(0 520 1045)"/></g>
<g filter="url(#b2)" ><path d="M545 1010 L546 1066" stroke="#5a524d" stroke-width="4" stroke-linecap="round" opacity="0.8"/><path d="M566 1018 L556 1070" stroke="#5a524d" stroke-width="5" stroke-linecap="round" opacity="0.7"/><path d="M528 1028 L548 1062" stroke="#665d58" stroke-width="4" stroke-linecap="round" opacity="0.6"/><path d="M592 1028 L565 1068" stroke="#665d58" stroke-width="4" stroke-linecap="round" opacity="0.6"/><path d="M612 1040 L590 1075" stroke="#70665f" stroke-width="4" stroke-linecap="round" opacity="0.5"/><path d="M716 1052 L725 1090" stroke="#6b5a52" stroke-width="3.5" stroke-linecap="round" opacity="0.8"/><path d="M712 1066 L721 1082" stroke="#6b5a52" stroke-width="3" stroke-linecap="round" opacity="0.6"/></g>
<g filter="url(#b4)" ><polygon points="735,1040 1100,1040 1100,1230 720,1230" fill="#857f6c"/><polygon points="775,1030 1100,1030 1100,1080 900,1070 775,1056" fill="#73765f"/></g>
<g filter="url(#b4)" ><polygon points="690,1058 760,1058 830,1065 930,1081 1035,1096 1025,1126 930,1117 830,1103 745,1094 690,1090" fill="#b5988b"/></g>
<g filter="url(#b8)" ><ellipse cx="870" cy="1185" rx="60" ry="28" fill="#85836e" opacity="0.7" transform="rotate(0 870 1185)"/><ellipse cx="800" cy="1135" rx="40" ry="15" fill="#958c7a" opacity="0.7" transform="rotate(0 800 1135)"/><ellipse cx="960" cy="1150" rx="30" ry="25" fill="#7e7b68" opacity="0.6" transform="rotate(0 960 1150)"/></g>
<g filter="url(#b1)" ><polygon points="355.6,1047.5 743.6,1097.1 729.5,1230 330,1230 330,1090 349,1052" fill="#80796a"/></g>
<g filter="url(#b8)" ><ellipse cx="430" cy="1150" rx="70" ry="55" fill="#867e6f" opacity="0.7" transform="rotate(0 430 1150)"/><ellipse cx="575" cy="1120" rx="75" ry="45" fill="#5a5951" opacity="0.8" transform="rotate(8 575 1120)"/><ellipse cx="625" cy="1160" rx="105" ry="62" fill="#55564e" opacity="0.5" transform="rotate(6 625 1160)"/><ellipse cx="660" cy="1180" rx="45" ry="45" fill="#67665d" opacity="0.7" transform="rotate(0 660 1180)"/><ellipse cx="700" cy="1130" rx="25" ry="30" fill="#777368" opacity="0.6" transform="rotate(0 700 1130)"/></g>
<g filter="url(#b2)" ><polygon points="570,1146 598,1150 548,1225 514,1225" fill="#3a3c39" opacity="0.9"/><path d="M699 1106 L650 1222" stroke="#484a45" stroke-width="7" stroke-linecap="round" opacity="0.85"/><path d="M603 1150 L593 1222" stroke="#53554f" stroke-width="8" stroke-linecap="round" opacity="0.6"/><path d="M556 1090 L566 1140" stroke="#484a46" stroke-width="12" stroke-linecap="round" opacity="0.55"/><path d="M640 1120 L655 1160" stroke="#55574f" stroke-width="8" stroke-linecap="round" opacity="0.4"/></g>
<g filter="url(#b1)" ><path d="M355.6 1047.5 L743.6 1097.1" stroke="#3a3834" stroke-width="3.8" stroke-linecap="round" opacity="0.95"/><path d="M350.5 1053 L336.5 1222" stroke="#c6beb4" stroke-width="3.2" stroke-linecap="round" opacity="0.65"/><path d="M738.5 1104 L727 1222" stroke="#b9b4a9" stroke-width="3.2" stroke-linecap="round" opacity="0.7"/></g>
<g filter="url(#b4)" ><polygon points="1080,1030 1425,1030 1412,1090 1396,1102 1380,1150 1363,1230 920,1230 960,1180 1020,1132 1046,1090" fill="#202739"/><polygon points="1526,1030 1616,1030 1592,1100 1574,1142 1552,1150 1520,1112" fill="#202739"/></g>
<g filter="url(#b4)" ><polygon points="1590,1030 1740,1030 1740,1230 1540,1230 1566,1145" fill="#66685a"/><polygon points="1375,1145 1400,1128 1525,1140 1562,1148 1545,1230 1360,1230" fill="#6f6c5c"/></g>
<g filter="url(#b4)" ><path d="M1566 1142 L1548 1222" stroke="#3b3f3e" stroke-width="9" stroke-linecap="round" opacity="0.8"/><ellipse cx="1408" cy="1112" rx="13" ry="28" fill="#a38e86" opacity="0.9" transform="rotate(15 1408 1112)"/></g>
<g filter="url(#b4)" ><ellipse cx="1105" cy="1050" rx="8" ry="6" fill="#4a5160" opacity="0.45" transform="rotate(0 1105 1050)"/><ellipse cx="1085" cy="1135" rx="8" ry="6" fill="#4a5160" opacity="0.45" transform="rotate(0 1085 1135)"/><ellipse cx="1215" cy="1155" rx="8" ry="6" fill="#4a5160" opacity="0.45" transform="rotate(0 1215 1155)"/><ellipse cx="1150" cy="1115" rx="8" ry="6" fill="#4a5160" opacity="0.45" transform="rotate(0 1150 1115)"/><ellipse cx="1015" cy="1150" rx="8" ry="6" fill="#4a5160" opacity="0.45" transform="rotate(0 1015 1150)"/><ellipse cx="1270" cy="1080" rx="8" ry="6" fill="#4a5160" opacity="0.45" transform="rotate(0 1270 1080)"/><ellipse cx="1360" cy="1100" rx="8" ry="6" fill="#4a5160" opacity="0.45" transform="rotate(0 1360 1100)"/><ellipse cx="1330" cy="1160" rx="8" ry="6" fill="#4a5160" opacity="0.45" transform="rotate(0 1330 1160)"/></g>
<rect x="334" y="190" width="1392" height="1031" filter="url(#noise)" style="mix-blend-mode:soft-light" opacity="0.34"/>
<polygon points="441.4,354.3 553.7,372.2 535.7,484.1 423.4,466.2" fill="#ababab" stroke="#000" stroke-width="1.5"/>
<polygon points="575.2,376.6 687.5,394.5 669.5,506.4 557.2,488.5" fill="#ababab" stroke="#000" stroke-width="1.5"/>
<polygon points="708.9,399 821.2,416.9 803.2,528.8 690.9,510.9" fill="#ababab" stroke="#000" stroke-width="1.5"/>
<polygon points="842.6,420.9 954.9,438.8 936.9,550.7 824.6,532.8" fill="#ababab" stroke="#000" stroke-width="1.5"/>
<polygon points="419,489.8 531.3,507.7 513.3,619.6 401,601.7" fill="#ababab" stroke="#000" stroke-width="1.5"/>
<polygon points="552.4,511.8 664.7,529.7 646.7,641.6 534.4,623.7" fill="#ababab" stroke="#000" stroke-width="1.5"/>
<polygon points="685.6,534.2 797.9,552.1 779.9,664 667.6,646.1" fill="#ababab" stroke="#000" stroke-width="1.5"/>
<polygon points="820,555.9 932.3,573.8 914.3,685.7 802,667.8" fill="#ababab" stroke="#000" stroke-width="1.5"/>
<polygon points="687.9,198.3 799.5,214.4 783.4,325.2 671.7,309.1" fill="#ababab" stroke="#000" stroke-width="1.5"/>
<polygon points="799.5,214.4 911.5,230.6 895.4,341.4 783.4,325.2" fill="#ababab" stroke="#000" stroke-width="1.5"/>
<polygon points="300,185.6 420.9,186.5 418.2,201.1 300,185.5" fill="#ababab" stroke="#000" stroke-width="1.5"/>
<polygon points="330,160 421.5,183 418.2,201.1 330,189.6" fill="#ababab" stroke="#000" stroke-width="1.5"/>
<polygon points="422.5,175 538,175 530.2,219.6 418.2,201.1" fill="#ababab" stroke="#000" stroke-width="1.5"/>
<polygon points="552.5,175 666,175 656.4,238.6 544.2,220.6" fill="#ababab" stroke="#000" stroke-width="1.5"/>
<polygon points="300,218.5 357.7,227.5 339.4,338.5 300,332" fill="#ababab" stroke="#000" stroke-width="1.5"/>
<polygon points="300,332 339.4,338.5 321,450 300,447" fill="#ababab" stroke="#000" stroke-width="1.5"/>
<polygon points="1428.5,950 1541.5,950 1518.5,1137.8 1405.8,1124.5" fill="#ababab" stroke="#000" stroke-width="1.5"/>
<polygon points="396.8,960.5 442,967.8 437.4,997.9 392.2,990.6" fill="#ababab" stroke="#000" stroke-width="1.5"/>
<polygon points="402.9,919.6 448.1,926.9 443.4,957 398.2,949.7" fill="#ababab" stroke="#000" stroke-width="1.5"/>
<polygon points="408.9,878.6 454.1,885.9 449.5,916 404.3,908.7" fill="#ababab" stroke="#000" stroke-width="1.5"/>
<polygon points="414.9,837.7 460.1,845 455.5,875.1 410.3,867.8" fill="#ababab" stroke="#000" stroke-width="1.5"/>
<polygon points="421,796.8 466.2,804.1 461.6,834.2 416.4,826.9" fill="#ababab" stroke="#000" stroke-width="1.5"/>
<polygon points="427.1,755.9 472.2,763.1 467.6,793.2 422.4,786" fill="#ababab" stroke="#000" stroke-width="1.5"/>
<polygon points="433.1,714.9 478.3,722.2 473.7,752.3 428.5,745" fill="#ababab" stroke="#000" stroke-width="1.5"/>
<polygon points="447.4,969 492.6,976.3 488,1006.4 442.8,999.1" fill="#ababab" stroke="#000" stroke-width="1.5"/>
<polygon points="453.4,928.1 498.6,935.4 494,965.5 448.8,958.2" fill="#ababab" stroke="#000" stroke-width="1.5"/>
<polygon points="459.5,887.1 504.7,894.4 500.1,924.5 454.9,917.2" fill="#ababab" stroke="#000" stroke-width="1.5"/>
<polygon points="465.5,846.2 510.7,853.5 506.1,883.6 460.9,876.3" fill="#ababab" stroke="#000" stroke-width="1.5"/>
<polygon points="471.6,805.3 516.8,812.6 512.2,842.7 467,835.4" fill="#ababab" stroke="#000" stroke-width="1.5"/>
<polygon points="477.6,764.4 522.9,771.6 518.2,801.8 473,794.5" fill="#ababab" stroke="#000" stroke-width="1.5"/>
<polygon points="483.7,723.4 528.9,730.7 524.3,760.8 479.1,753.5" fill="#ababab" stroke="#000" stroke-width="1.5"/>
<polygon points="529.5,981.1 574.7,988.4 570.1,1018.5 524.9,1011.2" fill="#ababab" stroke="#000" stroke-width="1.5"/>
<polygon points="535.5,940.2 580.8,947.5 576.1,977.6 530.9,970.3" fill="#ababab" stroke="#000" stroke-width="1.5"/>
<polygon points="541.6,899.2 586.8,906.5 582.2,936.6 537,929.3" fill="#ababab" stroke="#000" stroke-width="1.5"/>
<polygon points="547.6,858.3 592.9,865.6 588.2,895.7 543,888.4" fill="#ababab" stroke="#000" stroke-width="1.5"/>
<polygon points="553.7,817.4 598.9,824.7 594.3,854.8 549.1,847.5" fill="#ababab" stroke="#000" stroke-width="1.5"/>
<polygon points="559.8,776.5 605,783.8 600.4,813.9 555.1,806.6" fill="#ababab" stroke="#000" stroke-width="1.5"/>
<polygon points="565.8,735.5 611,742.8 606.4,772.9 561.2,765.6" fill="#ababab" stroke="#000" stroke-width="1.5"/>
<polygon points="582,989 627.2,996.3 622.6,1026.4 577.4,1019.1" fill="#ababab" stroke="#000" stroke-width="1.5"/>
<polygon points="588,948.1 633.2,955.4 628.6,985.5 583.4,978.2" fill="#ababab" stroke="#000" stroke-width="1.5"/>
<polygon points="594.1,907.1 639.3,914.4 634.7,944.5 589.5,937.2" fill="#ababab" stroke="#000" stroke-width="1.5"/>
<polygon points="600.1,866.2 645.4,873.5 640.8,903.6 595.5,896.3" fill="#ababab" stroke="#000" stroke-width="1.5"/>
<polygon points="606.2,825.3 651.4,832.6 646.8,862.7 601.6,855.4" fill="#ababab" stroke="#000" stroke-width="1.5"/>
<polygon points="612.2,784.4 657.5,791.6 652.9,821.8 607.6,814.5" fill="#ababab" stroke="#000" stroke-width="1.5"/>
<polygon points="618.3,743.4 663.5,750.7 658.9,780.8 613.7,773.5" fill="#ababab" stroke="#000" stroke-width="1.5"/>
<polygon points="664.7,1001 709.9,1008.3 705.3,1038.4 660.1,1031.1" fill="#ababab" stroke="#000" stroke-width="1.5"/>
<polygon points="670.8,960.1 716,967.4 711.4,997.5 666.1,990.2" fill="#ababab" stroke="#000" stroke-width="1.5"/>
<polygon points="676.8,919.1 722,926.4 717.4,956.5 672.2,949.2" fill="#ababab" stroke="#000" stroke-width="1.5"/>
<polygon points="682.9,878.2 728.1,885.5 723.5,915.6 678.2,908.3" fill="#ababab" stroke="#000" stroke-width="1.5"/>
<polygon points="688.9,837.3 734.1,844.6 729.5,874.7 684.3,867.4" fill="#ababab" stroke="#000" stroke-width="1.5"/>
<polygon points="695,796.4 740.2,803.6 735.6,833.8 690.4,826.5" fill="#ababab" stroke="#000" stroke-width="1.5"/>
<polygon points="701,755.4 746.2,762.7 741.6,792.8 696.4,785.5" fill="#ababab" stroke="#000" stroke-width="1.5"/>
<polygon points="717.5,1009.3 762.7,1016.6 758.1,1046.7 712.9,1039.4" fill="#ababab" stroke="#000" stroke-width="1.5"/>
<polygon points="723.5,968.4 768.8,975.7 764.1,1005.8 718.9,998.5" fill="#ababab" stroke="#000" stroke-width="1.5"/>
<polygon points="729.6,927.4 774.8,934.7 770.2,964.8 725,957.5" fill="#ababab" stroke="#000" stroke-width="1.5"/>
<polygon points="735.6,886.5 780.9,893.8 776.2,923.9 731,916.6" fill="#ababab" stroke="#000" stroke-width="1.5"/>
<polygon points="741.7,845.6 786.9,852.9 782.3,883 737.1,875.7" fill="#ababab" stroke="#000" stroke-width="1.5"/>
<polygon points="747.8,804.6 793,811.9 788.4,842 743.1,834.8" fill="#ababab" stroke="#000" stroke-width="1.5"/>
<polygon points="753.8,763.7 799,771 794.4,801.1 749.2,793.8" fill="#ababab"/>
<polygon points="752.6,762.9 797.8,770.2 793.2,800.3 748,793" fill="none" stroke="#66ff66" stroke-width="5.5" stroke-linejoin="miter"/>
<g font-family="DejaVu Sans, sans-serif" text-anchor="middle">
<text x="487.9" y="429.9" font-size="30" fill="#008000">&#10004;</text>
<text x="621.8" y="452.2" font-size="30" fill="#008000">&#10004;</text>
<text x="755.4" y="474.6" font-size="30" fill="#008000">&#10004;</text>
<text x="894.4" y="490.7" font-size="30" fill="#008000">&#10004;</text>
<text x="465" y="565" font-size="24.5" fill="#ff0000" stroke="#ff0000" stroke-width="0.35">&#10008;</text>
<text x="598.4" y="587" font-size="24.5" fill="#ff0000" stroke="#ff0000" stroke-width="0.35">&#10008;</text>
<text x="731.6" y="609.4" font-size="24.5" fill="#ff0000" stroke="#ff0000" stroke-width="0.35">&#10008;</text>
<text x="866.9" y="631.2" font-size="24.5" fill="#ff0000" stroke="#ff0000" stroke-width="0.35">&#10008;</text>
<text x="735" y="272.4" font-size="30" fill="#008000">&#10004;</text>
<text x="846.2" y="288.5" font-size="24.5" fill="#ff0000" stroke="#ff0000" stroke-width="0.35">&#10008;</text>
<text x="1467.5" y="1085.8" font-size="24.5" fill="#ff0000" stroke="#ff0000" stroke-width="0.35">&#10008;</text>
<text x="416" y="989.5" font-size="24.5" fill="#ff0000" stroke="#ff0000" stroke-width="0.35">&#10008;</text>
<text x="422" y="948.6" font-size="24.5" fill="#ff0000" stroke="#ff0000" stroke-width="0.35">&#10008;</text>
<text x="428.1" y="907.6" font-size="24.5" fill="#ff0000" stroke="#ff0000" stroke-width="0.35">&#10008;</text>
<text x="434.1" y="866.7" font-size="24.5" fill="#ff0000" stroke="#ff0000" stroke-width="0.35">&#10008;</text>
<text x="440.2" y="825.8" font-size="24.5" fill="#ff0000" stroke="#ff0000" stroke-width="0.35">&#10008;</text>
<text x="446.2" y="784.8" font-size="24.5" fill="#ff0000" stroke="#ff0000" stroke-width="0.35">&#10008;</text>
<text x="452.3" y="743.9" font-size="24.5" fill="#ff0000" stroke="#ff0000" stroke-width="0.35">&#10008;</text>
<text x="466.6" y="998" font-size="24.5" fill="#ff0000" stroke="#ff0000" stroke-width="0.35">&#10008;</text>
<text x="472.6" y="957.1" font-size="24.5" fill="#ff0000" stroke="#ff0000" stroke-width="0.35">&#10008;</text>
<text x="478.7" y="916.1" font-size="24.5" fill="#ff0000" stroke="#ff0000" stroke-width="0.35">&#10008;</text>
<text x="485.2" y="875.6" font-size="30" fill="#008000">&#10004;</text>
<text x="490.8" y="834.3" font-size="24.5" fill="#ff0000" stroke="#ff0000" stroke-width="0.35">&#10008;</text>
<text x="496.8" y="793.3" font-size="24.5" fill="#ff0000" stroke="#ff0000" stroke-width="0.35">&#10008;</text>
<text x="502.9" y="752.4" font-size="24.5" fill="#ff0000" stroke="#ff0000" stroke-width="0.35">&#10008;</text>
<text x="548.7" y="1010.1" font-size="24.5" fill="#ff0000" stroke="#ff0000" stroke-width="0.35">&#10008;</text>
<text x="554.7" y="969.2" font-size="24.5" fill="#ff0000" stroke="#ff0000" stroke-width="0.35">&#10008;</text>
<text x="560.8" y="928.2" font-size="24.5" fill="#ff0000" stroke="#ff0000" stroke-width="0.35">&#10008;</text>
<text x="566.9" y="887.3" font-size="24.5" fill="#ff0000" stroke="#ff0000" stroke-width="0.35">&#10008;</text>
<text x="572.9" y="846.4" font-size="24.5" fill="#ff0000" stroke="#ff0000" stroke-width="0.35">&#10008;</text>
<text x="578.9" y="805.5" font-size="24.5" fill="#ff0000" stroke="#ff0000" stroke-width="0.35">&#10008;</text>
<text x="585" y="764.5" font-size="24.5" fill="#ff0000" stroke="#ff0000" stroke-width="0.35">&#10008;</text>
<text x="601.2" y="1018" font-size="24.5" fill="#ff0000" stroke="#ff0000" stroke-width="0.35">&#10008;</text>
<text x="607.2" y="977.1" font-size="24.5" fill="#ff0000" stroke="#ff0000" stroke-width="0.35">&#10008;</text>
<text x="613.3" y="936.1" font-size="24.5" fill="#ff0000" stroke="#ff0000" stroke-width="0.35">&#10008;</text>
<text x="619.4" y="895.2" font-size="24.5" fill="#ff0000" stroke="#ff0000" stroke-width="0.35">&#10008;</text>
<text x="625.4" y="854.3" font-size="24.5" fill="#ff0000" stroke="#ff0000" stroke-width="0.35">&#10008;</text>
<text x="631.4" y="813.3" font-size="24.5" fill="#ff0000" stroke="#ff0000" stroke-width="0.35">&#10008;</text>
<text x="637.5" y="772.4" font-size="24.5" fill="#ff0000" stroke="#ff0000" stroke-width="0.35">&#10008;</text>
<text x="683.9" y="1030" font-size="24.5" fill="#ff0000" stroke="#ff0000" stroke-width="0.35">&#10008;</text>
<text x="689.9" y="989.1" font-size="24.5" fill="#ff0000" stroke="#ff0000" stroke-width="0.35">&#10008;</text>
<text x="696" y="948.1" font-size="24.5" fill="#ff0000" stroke="#ff0000" stroke-width="0.35">&#10008;</text>
<text x="702.1" y="907.2" font-size="24.5" fill="#ff0000" stroke="#ff0000" stroke-width="0.35">&#10008;</text>
<text x="708.1" y="866.3" font-size="24.5" fill="#ff0000" stroke="#ff0000" stroke-width="0.35">&#10008;</text>
<text x="714.1" y="825.3" font-size="24.5" fill="#ff0000" stroke="#ff0000" stroke-width="0.35">&#10008;</text>
<text x="720.2" y="784.4" font-size="24.5" fill="#ff0000" stroke="#ff0000" stroke-width="0.35">&#10008;</text>
<text x="737.2" y="1038.7" font-size="30" fill="#008000">&#10004;</text>
<text x="743.2" y="997.8" font-size="30" fill="#008000">&#10004;</text>
<text x="749.3" y="956.8" font-size="30" fill="#008000">&#10004;</text>
<text x="755.4" y="915.9" font-size="30" fill="#008000">&#10004;</text>
<text x="761.4" y="875" font-size="30" fill="#008000">&#10004;</text>
<text x="767.4" y="834" font-size="30" fill="#008000">&#10004;</text>
<text x="773" y="792.7" font-size="24.5" fill="#ff0000" stroke="#ff0000" stroke-width="0.35">&#10008;</text>
</g>
<g font-family="Liberation Sans, Arial, sans-serif" font-size="10.67" fill="#000" text-anchor="middle">
<text x="488.5" y="415.9">B/10/07</text>
<text x="622.4" y="438.2">B/10/06</text>
<text x="756" y="460.6">B/10/05</text>
<text x="895" y="476.7">B/10/04</text>
<text x="466.1" y="551.4">B/09/07</text>
<text x="599.5" y="573.4">B/09/06</text>
<text x="732.8" y="595.8">B/09/05</text>
<text x="868" y="617.6">B/09/04</text>
<text x="735.6" y="258.4">B/11/05</text>
<text x="847.3" y="274.9">B/11/04</text>
<text x="1468.6" y="1072.2">C/01/07</text>
<text x="417.1" y="975.9">D/01/01</text>
<text x="423.1" y="935">D/01/02</text>
<text x="429.2" y="894">D/01/03</text>
<text x="435.2" y="853.1">D/01/04</text>
<text x="441.3" y="812.2">D/01/05</text>
<text x="447.4" y="771.2">D/01/06</text>
<text x="453.4" y="730.3">D/01/07</text>
<text x="467.7" y="984.4">D/02/01</text>
<text x="473.8" y="943.5">D/02/02</text>
<text x="479.8" y="902.5">D/02/03</text>
<text x="485.8" y="861.6">D/02/04</text>
<text x="491.9" y="820.7">D/02/05</text>
<text x="497.9" y="779.8">D/02/06</text>
<text x="504" y="738.8">D/02/07</text>
<text x="549.8" y="996.5">D/03/01</text>
<text x="555.8" y="955.6">D/03/02</text>
<text x="561.9" y="914.6">D/03/03</text>
<text x="568" y="873.7">D/03/04</text>
<text x="574" y="832.8">D/03/05</text>
<text x="580" y="791.9">D/03/06</text>
<text x="586.1" y="750.9">D/03/07</text>
<text x="602.3" y="1004.4">D/04/01</text>
<text x="608.3" y="963.5">D/04/02</text>
<text x="614.4" y="922.5">D/04/03</text>
<text x="620.5" y="881.6">D/04/04</text>
<text x="626.5" y="840.7">D/04/05</text>
<text x="632.5" y="799.8">D/04/06</text>
<text x="638.6" y="758.8">D/04/07</text>
<text x="685" y="1016.4">D/05/01</text>
<text x="691" y="975.5">D/05/02</text>
<text x="697.1" y="934.5">D/05/03</text>
<text x="703.2" y="893.6">D/05/04</text>
<text x="709.2" y="852.7">D/05/05</text>
<text x="715.2" y="811.8">D/05/06</text>
<text x="721.3" y="770.8">D/05/07</text>
<text x="737.8" y="1024.7">D/06/01</text>
<text x="743.8" y="983.8">D/06/02</text>
<text x="749.9" y="942.8">D/06/03</text>
<text x="756" y="901.9">D/06/04</text>
<text x="762" y="861">D/06/05</text>
<text x="768" y="820">D/06/06</text>
<text x="774.1" y="779.1">D/06/07</text>
</g>
<path d="M776 760 V782" stroke="#3b97dd" stroke-width="2"/><path d="M776.2 760 L790.6 766.1 L776.4 771.2Z" stroke="#3b97dd" stroke-width="1.8" fill="#fff" stroke-linejoin="round"/><circle cx="780" cy="766" r="1.7" fill="#8a8a8a"/><circle cx="776.1" cy="782" r="1.7" fill="#3b97dd"/>
<rect x="1483.5" y="1185" width="201.5" height="34" rx="9" fill="#fff"/>
<text x="1583.5" y="1201" font-family="Liberation Sans, Arial, sans-serif" font-size="15" fill="#29abe2" text-anchor="middle">5 m</text>
<rect x="1490" y="1206.3" width="188" height="6" fill="#d6e9f7" stroke="#29abe2" stroke-width="0.8"/>
<rect x="1490" y="1206" width="47.5" height="6.5" fill="#29abe2"/><rect x="1583.2" y="1206" width="47.5" height="6.5" fill="#29abe2"/>
</svg>
<div id="dlg"></div>
<div class="abs" style="left:868px;top:5px;width:1373px;height:30.5px;background:#2a82cf"></div>
<svg class="abs" style="left:876px;top:14px" width="14" height="12" viewBox="0 0 14 12"><path d="M1 4 Q4 0.5 7.5 1 Q11 0.5 13 3.5 Q10 4.5 8.3 4.2 L7.6 10.5 L6.6 10.5 L6.8 4.4 Q4 5.5 1 4Z" fill="#5db15a"/></svg>
<div class="t" style="left:898.5px;top:12.5px;color:#fff;font-size:12px;letter-spacing:-0.05px">Gaja<span style="font-size:10px;position:relative;top:-2px;letter-spacing:0;margin:0 1px">&#174;</span>Matrix Sachdateneingabe - Grabverwaltung - D<span style="display:inline-block;width:41.5px;height:10px"></span><span style="letter-spacing:-0.3px"> Feld:D Reihe:06 Nr.:07</span></div>
<div class="abs" style="left:1180px;top:12px;width:42px;height:16px;background:#5f9fda;filter:blur(1.8px);border-radius:4px"></div>
<svg class="abs" style="left:2110px;top:5px" width="130" height="30" viewBox="0 0 130 30" fill="none" stroke="#fff" stroke-width="1"><path d="M11 15.5 H21"/><rect x="56.5" y="10.5" width="9" height="9"/><path d="M102 10.5 L112 20.5 M112 10.5 L102 20.5" stroke-width="1.1"/></svg>
<svg class="abs" style="left:875px;top:42px" width="28" height="17" viewBox="0 0 28 17" fill="none" stroke-linecap="round" stroke-linejoin="round"><path d="M7.3 2.4 L1.8 8.3 L7.3 14.2" stroke="#3a96dd" stroke-width="1.7"/><path d="M15 2.4 H23.5 Q25.2 2.4 25.2 4 V12.6 Q25.2 14.2 23.5 14.2 H15 Q13.2 14.2 13.2 12.6 V4 Q13.2 2.4 15 2.4" stroke="#7d7d7d" stroke-width="1.6"/><path d="M3.5 8.3 H19.3" stroke="#7d7d7d" stroke-width="1.5"/><path d="M2.5 8.3 H9" stroke="#3a96dd" stroke-width="1.6"/></svg>
<div class="abs" style="left:909px;top:40px;width:1px;height:22px;background:#a0a0a0"></div>
<svg class="abs" style="left:918.4px;top:37px" width="26" height="27" viewBox="0 0 26 27" fill="none" stroke-linecap="round" stroke-linejoin="round"><g stroke="#7d7d7d" stroke-width="1.6"><ellipse cx="13" cy="14.4" rx="11.7" ry="4.2"/><path d="M1.3 14.6 V21.3 Q1.3 25.3 13 25.3 Q24.7 25.3 24.7 21.3 V14.6"/></g><path d="M5.5 20.3 Q13 22.6 20.5 20.3" stroke="#3a96dd" stroke-width="1.7"/><path d="M6 6.2 H20.5 M10 2.4 L5.8 6.2 L9.5 10" stroke="#7d7d7d" stroke-width="1.5"/></svg>
<svg class="abs" style="left:955.4px;top:37px" width="26" height="27" viewBox="0 0 26 27" fill="none" stroke-linecap="round" stroke-linejoin="round"><g stroke="#7d7d7d" stroke-width="1.6"><ellipse cx="13" cy="14.4" rx="11.7" ry="4.2"/><path d="M1.3 14.6 V21.3 Q1.3 25.3 13 25.3 Q24.7 25.3 24.7 21.3 V14.6"/></g><path d="M5.5 20.3 Q13 22.6 20.5 20.3" stroke="#3a96dd" stroke-width="1.7"/><path d="M7.3 2.3 L13 7.5 L18.7 2.3" stroke="#3a96dd" stroke-width="1.7"/></svg>
<div class="abs" style="left:989px;top:40px;width:1px;height:22px;background:#a0a0a0"></div>
<svg class="abs" style="left:998.5px;top:37px" width="27" height="27" viewBox="0 0 27 27" fill="none" stroke-linecap="round" stroke-linejoin="round"><path d="M3.2 24.3 L1.3 11.5 H24.7 L22.8 24.3Z" stroke="#7d7d7d" stroke-width="1.6"/><path d="M3 11 V2.3 H10.3 L12.5 7 H22.3 V11" stroke="#7d7d7d" stroke-width="1.6"/></svg>
<div class="abs" style="left:1032px;top:40px;width:1px;height:22px;background:#a0a0a0"></div>
<svg class="abs" style="left:1041.5px;top:36.5px" width="27" height="28" viewBox="0 0 27 28" fill="none" stroke-linecap="round" stroke-linejoin="round"><g stroke="#7d7d7d" stroke-width="2"><path d="M7 9 V2.5 H19 V9"/><path d="M6.5 21 H3 Q1.5 21 1.5 19.5 V10.5 Q1.5 9 3 9 H23 Q24.5 9 24.5 10.5 V19.5 Q24.5 21 23 21 H19.5"/><path d="M6.5 14.5 H19.5 V25.5 H6.5Z"/></g><path d="M10 18.5 H16 M10 21.5 H16" stroke="#3a96dd" stroke-width="2"/><circle cx="5" cy="12.3" r="0.9" fill="#7d7d7d"/></svg>
<div class="abs" style="left:1089px;top:57px;width:1141px;height:5.5px;border:1px solid #dcdcdc;border-right-color:#e6e6e6;background:#fff"></div>
<div class="abs" style="left:1150px;top:39px;width:57px;height:19px;border:1px solid #d9d9d9;background:#f0f0f0"></div>
<div class="abs" style="left:1089px;top:37px;width:62px;height:21px;border:1px solid #d9d9d9;border-bottom:none;background:#fff"></div>
<div class="t" style="left:1095px;top:38.5px;font-size:11px;letter-spacing:-0.15px">Grabstelle</div>
<div class="t" style="left:1155px;top:41px;font-size:11px;letter-spacing:-0.15px">Kontrollen</div>
<div class="abs" style="left:869px;top:65px;width:1371px;height:955px;border:1px solid #828790;border-right-color:#9a9fa8;background:#fff"></div>
<div class="abs" style="left:869px;top:1020px;width:1371px;height:16.5px;background:#e4e4e4"></div>
<div class="grp" style="left:886px;top:84.5px;width:519px;height:345.5px"><span>Lage</span></div>
<div class="t" style="left:898px;top:101px">Friedhof</div>
<div class="cmb" style="left:898px;top:123px;width:482px"><i></i><b>D&#246;</b><svg class="abs" style="right:0;top:0" width="19" height="19" viewBox="0 0 19 19" fill="none"><path d="M5.6 8 L9.6 12 L13.6 8" stroke="#404040" stroke-width="1.3"/></svg></div>
<div class="abs" style="left:917px;top:127px;width:37px;height:14px;background:#c4c4c4;filter:blur(1.5px);border-radius:3px"></div>
<div class="t" style="left:968px;top:161px">Grabfeld</div>
<div class="inp" style="left:968px;top:178px;width:98px">D</div>
<div class="t" style="left:1080px;top:161px">Grabreihe</div>
<div class="inp" style="left:1080px;top:178px;width:98px">06</div>
<div class="t" style="left:1192px;top:161px">Grabnummer</div>
<div class="inp" style="left:1192px;top:178px;width:98px">07</div>
<div class="t" style="left:898px;top:210px">Grabtyp</div>
<div class="cmb" style="left:898px;top:232px;width:482px"><i></i><b>Urnenwahlgrabst&#228;tte (UG) (m x m)</b><svg class="abs" style="right:0;top:0" width="19" height="19" viewBox="0 0 19 19" fill="none"><path d="M5.6 8 L9.6 12 L13.6 8" stroke="#404040" stroke-width="1.3"/></svg></div>
<div class="t" style="left:1087px;top:270px">Breite [m]</div>
<div class="t" style="left:1192px;top:270px">L&#228;nge [m]</div>
<div class="t" style="left:898px;top:291px;letter-spacing:-0.12px">Grabgr&#246;&#223;e (abweichend)</div>
<div class="inp" style="left:1087px;top:287px;width:98px">0,80</div>
<div class="inp" style="left:1192px;top:287px;width:98px">1,20</div>
<div class="t" style="left:898px;top:321px">Hinweis</div>
<div class="inp" style="left:898px;top:338px;width:482px;border-color:#adadad;letter-spacing:-0.12px">&#220;bernahme aus ProSiris (Grab unbelegt)</div>
<div class="t" style="left:1024px;top:384.5px;letter-spacing:0px">Grabstelle wurde entfernt</div>
<div class="abs" style="left:1187px;top:384px;width:13px;height:13px;border:1px solid #333;background:#fff"></div>
<div class="grp" style="left:886px;top:446.3px;width:519px;height:282.7px"><span>Akten</span></div>
<div class="abs" style="left:1348px;top:464px;width:31px;height:24px;border:1px solid #adadad;background:#e1e1e1"></div>
<svg class="abs" style="left:1356px;top:469px" width="15" height="15" viewBox="0 0 15 15"><path d="M7.5 1 V14 M1 7.5 H14" stroke="#3a8fdc" stroke-width="2.8"/></svg>
<div class="abs" style="left:905px;top:491px;width:476px;height:211.5px;border:1px solid #6d6d6d;background:#fff"></div>
<div class="abs" style="left:906px;top:492px;width:474px;height:19.5px;background:#f0f0f0;border-bottom:1px solid #8a8a8a"></div>
<div class="abs" style="left:906px;top:527.5px;width:474px;height:1px;background:#555"></div>
<div class="abs" style="left:1379px;top:512px;width:1px;height:16px;background:#555"></div>
<div class="t" style="left:908.5px;top:494.5px;letter-spacing:-0.3px">Aktenzeichen</div>
<div class="abs" style="left:984.6px;top:496.3px;width:10.4px;height:10.4px;border:1.2px solid #222;border-radius:50%;background:#fff"></div>
<div class="abs" style="left:999.6px;top:492px;width:1.3px;height:36px;background:#6a6a6a"></div>
<div class="t" style="left:1002.1px;top:494.5px;letter-spacing:-0.3px">Status</div>
<div class="abs" style="left:1040.8px;top:496.3px;width:10.4px;height:10.4px;border:1.2px solid #222;border-radius:50%;background:#fff"></div>
<div class="t" style="left:1001.1px;top:512.5px">offen</div>
<div class="abs" style="left:1055.8px;top:492px;width:1.3px;height:36px;background:#6a6a6a"></div>
<div class="t" style="left:1058.3px;top:494.5px;letter-spacing:-0.3px">Nutzungsbeginn</div>
<div class="abs" style="left:1150.6px;top:496.3px;width:10.4px;height:10.4px;border:1.2px solid #222;border-radius:50%;background:#fff"></div>
<div class="t" style="left:1057.3px;top:512.5px">10.06.2021</div>
<div class="abs" style="left:1165.6px;top:492px;width:1.3px;height:36px;background:#6a6a6a"></div>
<div class="t" style="left:1168.1px;top:494.5px;letter-spacing:-0.3px">Nutzungsende</div>
<div class="abs" style="left:1250.8px;top:496.3px;width:10.4px;height:10.4px;border:1.2px solid #222;border-radius:50%;background:#fff"></div>
<div class="t" style="left:1167.1px;top:512.5px">09.06.2036</div>
<div class="abs" style="left:1265.8px;top:492px;width:1.3px;height:36px;background:#6a6a6a"></div>
<div class="t" style="left:1268.3px;top:494.5px;letter-spacing:-0.3px">geschlossen</div>
<div class="abs" style="left:1365px;top:496.3px;width:10.4px;height:10.4px;border:1.2px solid #222;border-radius:50%;background:#fff"></div>
</body></html>
